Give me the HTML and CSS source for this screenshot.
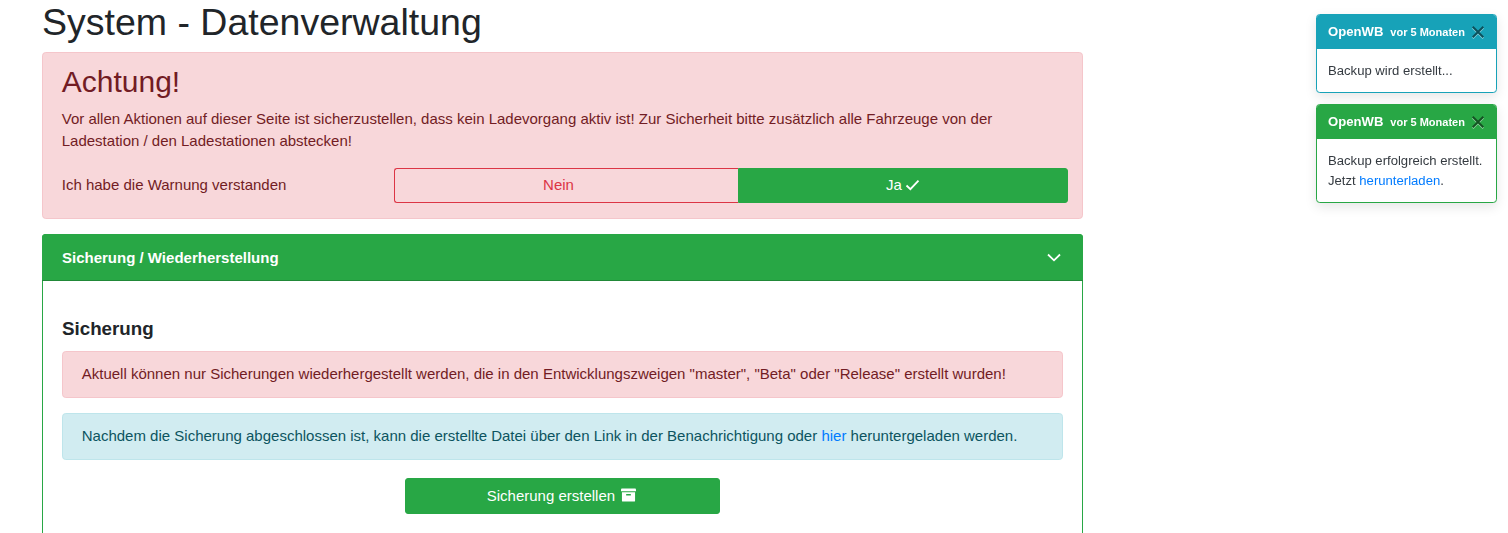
FILE: index.html
```html
<!DOCTYPE html>
<html lang="de">
<head>
<meta charset="utf-8">
<title>System - Datenverwaltung</title>
<link rel="stylesheet" href="styles.css">
</head>
<body>
<main class="page">
  <h1 class="title">System - Datenverwaltung</h1>
  <section class="alert alert-danger warning">
    <h2 class="alert-heading">Achtung!</h2>
    <p class="warning-text">Vor allen Aktionen auf dieser Seite ist sicherzustellen, dass kein Ladevorgang aktiv ist! Zur Sicherheit bitte zusätzlich alle Fahrzeuge von der Ladestation / den Ladestationen abstecken!</p>
    <div class="confirm-row">
      <span class="confirm-label">Ich habe die Warnung verstanden</span>
      <div class="btn-group">
        <button class="toggle toggle-no">Nein</button>
        <button class="toggle toggle-yes">Ja
          <svg class="icon-check" viewBox="0 0 16 13" aria-hidden="true"><path d="M1.5 7 L5.7 11 L14.5 1.8" fill="none" stroke="currentColor" stroke-width="2"/></svg>
        </button>
      </div>
    </div>
  </section>
  <section class="card">
    <header class="card-header">
      <span class="card-header-text">Sicherung / Wiederherstellung</span>
      <svg class="icon-chevron" viewBox="0 0 14 9" aria-hidden="true"><path d="M1 1.5 L7 7.3 L13 1.5" fill="none" stroke="currentColor" stroke-width="1.8"/></svg>
    </header>
    <div class="card-body">
      <h3 class="card-title">Sicherung</h3>
      <div class="alert alert-danger notice">Aktuell können nur Sicherungen wiederhergestellt werden, die in den Entwicklungszweigen "master", "Beta" oder "Release" erstellt wurden!</div>
      <div class="alert alert-info notice">Nachdem die Sicherung abgeschlossen ist, kann die erstellte Datei über den Link in der Benachrichtigung oder <a href="#">hier</a> heruntergeladen werden.</div>
      <div class="actions">
        <button class="btn-create">Sicherung erstellen
          <svg class="icon-archive" viewBox="0 0 16 14" aria-hidden="true"><path d="M0 1a1 1 0 0 1 1-1h14a1 1 0 0 1 1 1v2H0z" fill="currentColor"/><path fill-rule="evenodd" d="M1 4h14v9a1 1 0 0 1-1 1H2a1 1 0 0 1-1-1zm4.5 2v1.5h5V6z" fill="currentColor"/></svg>
        </button>
      </div>
    </div>
  </section>
</main>
<aside class="toasts">
  <div class="toast toast-info">
    <div class="toast-header"><strong>OpenWB</strong><small>vor 5 Monaten</small>
      <svg class="toast-close" viewBox="0 0 12 12" aria-hidden="true"><path d="M.7.7 11.3 11.3M11.3.7.7 11.3" fill="none" stroke="currentColor" stroke-width="2"/></svg>
    </div>
    <div class="toast-body">Backup wird erstellt...</div>
  </div>
  <div class="toast toast-success">
    <div class="toast-header"><strong>OpenWB</strong><small>vor 5 Monaten</small>
      <svg class="toast-close" viewBox="0 0 12 12" aria-hidden="true"><path d="M.7.7 11.3 11.3M11.3.7.7 11.3" fill="none" stroke="currentColor" stroke-width="2"/></svg>
    </div>
    <div class="toast-body">Backup erfolgreich erstellt.<br>Jetzt <a href="#">herunterladen</a>.</div>
  </div>
</aside>
</body>
</html>
```
FILE: styles.css
```css
* { box-sizing: border-box; }
html, body { margin: 0; height: 533px; overflow: hidden; background: #fff; }
body { font-family: "Liberation Sans", Arial, sans-serif; font-size: 15px; line-height: 1.5; color: #212529; }
a { color: #007bff; text-decoration: none; }
.page { width: 1041px; margin-left: 42px; }
.title { margin: 0 0 7px; font-size: 37.5px; font-weight: 400; line-height: 45px; }
.alert { border: 1px solid; border-radius: 3.75px; }
.alert-danger { background: #f8d7da; border-color: #f5c6cb; color: #721c24; }
.alert-info { background: #d1ecf1; border-color: #bee5eb; color: #0c5460; }
.warning { height: 167px; padding: 11.25px 14px 0 18.75px; margin-bottom: 15px; }
.alert-heading { margin: 0 0 7.5px; font-size: 30px; font-weight: 400; line-height: 36px; color: inherit; }
.warning-text { margin: 0 0 15px; line-height: 22.5px; }
.confirm-row { display: flex; align-items: center; }
.confirm-label { width: 332.25px; }
.btn-group { flex: 1; display: flex; height: 35px; }
.toggle { font: inherit; border: 1px solid; padding: 0; }
.toggle-no { width: 344px; padding-right: 16px; background: transparent; border-color: #dc3545; border-right: 0; color: #dc3545; border-radius: 3px 0 0 3px; }
.toggle-yes { flex: 1; background: #28a745; border-color: #28a745; color: #fff; border-radius: 0 3px 3px 0; }
.icon-check { width: 15px; height: 12px; vertical-align: -1px; margin-left: -1px; }
.card { border: 1px solid #28a745; border-bottom: 0; border-radius: 3.75px 3.75px 0 0; }
.card-header { display: flex; justify-content: space-between; align-items: center; height: 47px; margin: -1px -1px 0; padding: 0 22px 0 20px; background: #28a745; border-bottom: 1px solid #218838; border-radius: 3.75px 3.75px 0 0; color: #fff; font-weight: 700; }
.card-header-text { margin-top: 2px; }
.icon-chevron { width: 14px; height: 9px; }
.card-body { padding: 34px 19px 19px; }
.card-title { margin: 0 0 9px; font-size: 18.75px; font-weight: 700; line-height: 27px; }
.notice { padding: 11.25px 18.75px; margin-bottom: 15px; line-height: 22.5px; }
.actions { display: flex; justify-content: center; margin-top: 18px; }
.btn-create { width: 315px; height: 36px; font: inherit; color: #fff; background: #28a745; border: 1px solid #28a745; border-radius: 3px; padding: 0 2px 0 0; }
.icon-archive { width: 15px; height: 14px; vertical-align: -1px; margin-left: 2px; }
.toasts { position: fixed; left: 1316px; top: 14px; width: 181px; display: flex; flex-direction: column; gap: 11px; }
.toast { background: #fff; border: 1px solid; border-radius: 3.75px; box-shadow: 0 4px 12px rgba(0,0,0,.1); font-size: 13.125px; overflow: hidden; }
.toast-info { border-color: #17a2b8; }
.toast-success { border-color: #28a745; }
.toast-header { display: flex; align-items: center; height: 34px; padding: 0 11px; color: #fff; }
.toast-info .toast-header { background: #17a2b8; }
.toast-success .toast-header { background: #28a745; }
.toast-header strong { font-size: 13.125px; }
.toast-header small { font-size: 11px; font-weight: 700; margin-left: 7px; }
.toast-close { width: 12px; height: 12px; margin-left: auto; margin-right: 1px; color: #000; opacity: .5; filter: drop-shadow(0 1px 0 #fff); }
.toast-body { padding: 12px 11px 11.6px; line-height: 19.7px; color: #343a40; }
```
